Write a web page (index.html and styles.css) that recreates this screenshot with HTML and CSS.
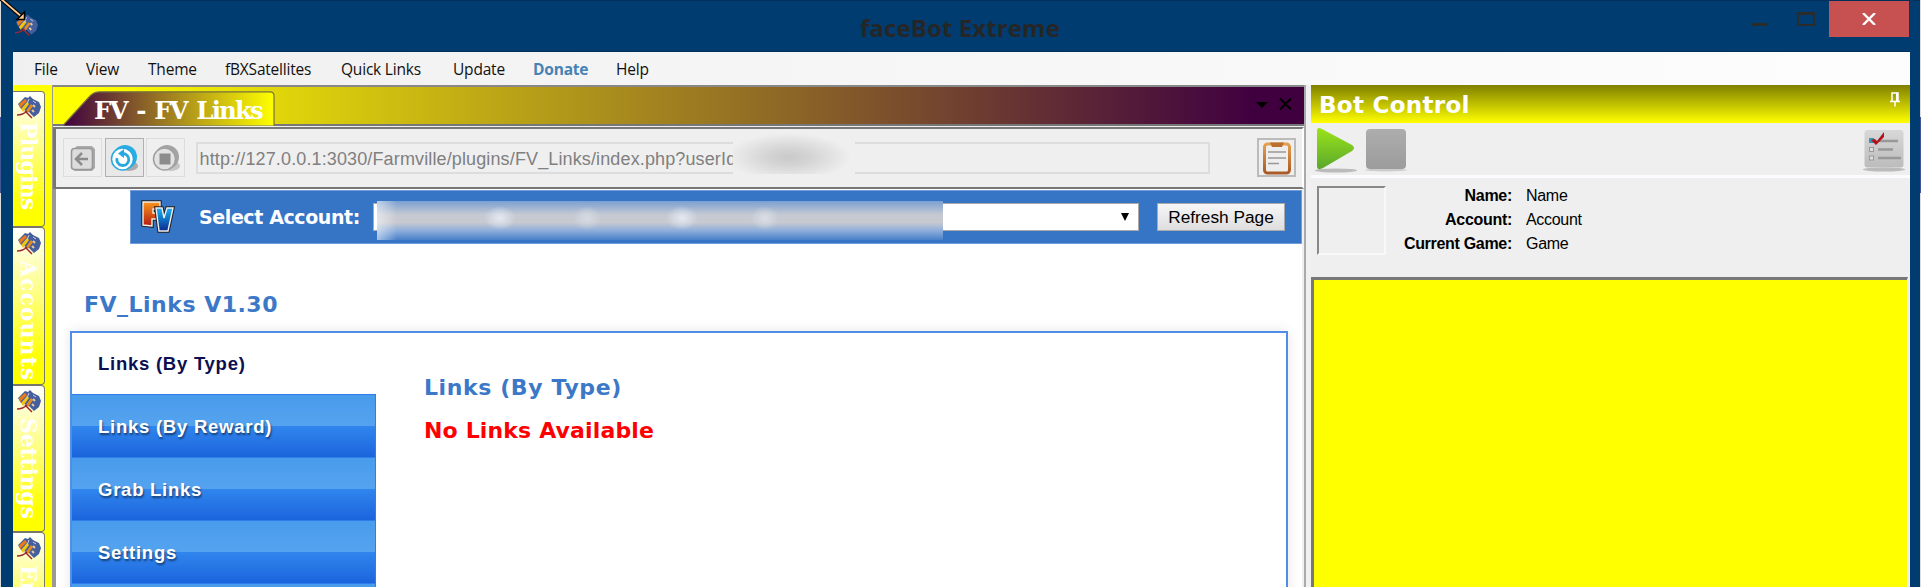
FILE: index.html
```
<!DOCTYPE html>
<html lang="en">
<head>
    <meta charset="UTF-8">
    <title>faceBot Extreme</title>
    <link rel="stylesheet" href="styles.css">
</head>
<body>
    <svg class="defs" width="0" height="0">
        <defs>
            <linearGradient id="green" x1="0" y1="0" x2="0" y2="1"><stop offset="0" stop-color="#9be31a"/><stop offset="1" stop-color="#5aa82c"/></linearGradient>
            <linearGradient id="grey" x1="0" y1="0" x2="0" y2="1"><stop offset="0" stop-color="#adadad"/><stop offset="1" stop-color="#9c9c9c"/></linearGradient>
            <linearGradient id="sheet" x1="0" y1="0" x2="0" y2="1"><stop offset="0" stop-color="#d8d8d8"/><stop offset="1" stop-color="#bcbcbc"/></linearGradient>
            <linearGradient id="wood" x1="0" y1="0" x2="0" y2="1"><stop offset="0" stop-color="#e5a04c"/><stop offset="1" stop-color="#a85a28"/></linearGradient>
            <linearGradient id="orange" x1="0" y1="0" x2="0" y2="1"><stop offset="0" stop-color="#f8961e"/><stop offset="1" stop-color="#b41a10"/></linearGradient>
            <linearGradient id="blue" x1="0" y1="0" x2="0" y2="1"><stop offset="0" stop-color="#18b4f4"/><stop offset="1" stop-color="#0a2a90"/></linearGradient>
            <linearGradient id="tab" x1="0" y1="0" x2="1" y2="0"><stop offset="0" stop-color="#400040"/><stop offset="1" stop-color="#ffff00"/></linearGradient>
        </defs>
        <symbol id="fb" viewBox="0 0 24 23">
            <path d="M1 8 8 1l3 1 2-2 3 3 6 3 2 5-2 6-5 4-5-5-8-3z" fill="#455f9e"/>
            <path d="M2 8 8 3l2 2-7 7z" fill="#e8791c"/>
            <path d="M4 13 10 6l2 2-6 8z" fill="#f5c411"/>
            <path d="M9 15l5-7 2 2-5 7z" fill="#e58b1e"/>
            <path d="M16 9l2 2M15 14l2 2" stroke="#e8c79a" stroke-width="2"/>
            <path d="M12 3l-2 5M16 5l3 2" stroke="#c9d0e4" stroke-width="1"/>
            <path d="M0 19q6 0 10-4M8 15l7 7" stroke="#9c2832" stroke-width="1.5" fill="none"/>
        </symbol>
    </svg>

    <div class="window">
        <header class="titlebar">
            <svg class="app-icon" viewBox="0 0 24 23"><use href="#fb"/></svg>
            <h1>faceBot Extreme</h1>
            <div class="window-buttons">
                <span class="minimize"></span>
                <span class="maximize"></span>
                <span class="close"><svg width="14" height="12" viewBox="0 0 14 12"><path d="M1 0l12 12M13 0L1 12" stroke="#fff" stroke-width="2.4"/></svg></span>
            </div>
        </header>

        <nav class="menu">
            <a>File</a><a>View</a><a>Theme</a><a>fBXSatellites</a><a>Quick Links</a><a>Update</a><a class="donate">Donate</a><a>Help</a>
        </nav>

        <main class="workspace">
            <aside class="side-tabs">
                <div class="side-tab plugins"><svg viewBox="0 0 24 23"><use href="#fb"/></svg><span>Plugins</span></div>
                <div class="side-tab accounts"><svg viewBox="0 0 24 23"><use href="#fb"/></svg><span>Accounts</span></div>
                <div class="side-tab settings"><svg viewBox="0 0 24 23"><use href="#fb"/></svg><span>Settings</span></div>
                <div class="side-tab extra"><svg viewBox="0 0 24 23"><use href="#fb"/></svg><span>Er</span></div>
            </aside>

            <section class="document">
                <div class="tab-strip">
                    <div class="doc-tab">
                        <svg class="tab-shape" width="212" height="35" viewBox="0 0 212 35"><path d="M0 34.5 27 5Q31 .8 37 .8H207q4 0 4 4V34.5" fill="url(#tab)" stroke="#77713c" stroke-width="1.2"/></svg>
                        <span>FV - FV Links</span>
                    </div>
                    <svg class="strip-icons" width="38" height="14" viewBox="0 0 38 14"><path d="M0 5h12L6 11z"/><path d="M24 1.500l11 11M35 1.500l-11 11" stroke="#000" stroke-width="2"/></svg>
                </div>

                <div class="toolbar">
                    <span class="tool"><svg width="28" height="28" viewBox="0 0 28 28"><path d="M5 5 8 2H23l3 3V24l-3 3H5z" fill="#aaa"/><rect x="2.500" y="4.500" width="21" height="21" rx="3" fill="#dcdcdc" stroke="#999" stroke-width="1.600"/><path d="M19 15H8M13 9l-6 6 6 6" fill="none" stroke="#8c8c8c" stroke-width="2.500"/></svg></span>
                    <span class="tool active"><svg width="28" height="28" viewBox="0 0 28 28"><ellipse cx="19" cy="22" rx="9" ry="5" fill="#aaa"/><circle cx="15" cy="13" r="12" fill="#29aee4"/><circle cx="12.500" cy="15" r="11" fill="#fff" stroke="#29a8de" stroke-width="1.500"/><path d="M7 14a6 6 0 1 0 6-4.500" fill="none" stroke="#29a8de" stroke-width="2.800"/><path d="M14 5v9L8 9.500z" fill="#29a8de"/></svg></span>
                    <span class="tool"><svg width="28" height="28" viewBox="0 0 28 28"><ellipse cx="19" cy="22" rx="9" ry="5" fill="#c4c4c4"/><circle cx="15" cy="13" r="12" fill="#a4a4a4"/><circle cx="12.500" cy="15" r="11" fill="#e2e2e2" stroke="#a0a0a0" stroke-width="1.500"/><rect x="7.500" y="9.500" width="11" height="11" fill="#8c8c8c"/></svg></span>
                    <div class="address"><span class="url">http://127.0.0.1:3030/Farmville/plugins/FV_Links/index.php?userId</span><span class="address-mask"></span></div>
                    <span class="tool clipboard"><svg width="30" height="34" viewBox="0 0 30 34"><rect x="2.500" y="3" width="25" height="29" rx="3" fill="#eee" stroke="url(#wood)" stroke-width="3"/><path d="M8 1.500H22L20 6H10z" fill="#b96f30"/><path d="M6 11H24M6 17H24M6 22.500H17" stroke="#999" stroke-width="1.500"/></svg></span>
                </div>

                <div class="page">
                    <div class="account-bar">
                        <svg class="fv-logo" width="34" height="34" viewBox="0 0 34 34">
                            <path d="M2 2H19V9H12V13H18V19H11V26L2 25z" fill="url(#orange)" stroke="#222" stroke-width="3.500"/>
                            <path d="M2 2H19V9H12V13H18V19H11V26L2 25z" fill="url(#orange)" stroke="#eee" stroke-width="1.400"/>
                            <path d="M15 8H21L23 18 26 8H32L27 31H18z" fill="url(#blue)" stroke="#222" stroke-width="3.500"/>
                            <path d="M15 8H21L23 18 26 8H32L27 31H18z" fill="url(#blue)" stroke="#eee" stroke-width="1.400"/>
                        </svg>
                        <label>Select Account:</label>
                        <div class="account-select"><span class="account-mask"></span><svg width="8" height="8" viewBox="0 0 8 8"><path d="M0 0H8L4 8z"/></svg></div>
                        <button>Refresh Page</button>
                    </div>
                    <h2>FV_Links V1.30</h2>
                    <div class="panel">
                        <ul class="links-menu">
                            <li class="current">Links (By Type)</li>
                            <li>Links (By Reward)</li>
                            <li>Grab Links</li>
                            <li>Settings</li>
                            <li></li>
                        </ul>
                        <div class="content">
                            <h3>Links (By Type)</h3>
                            <p>No Links Available</p>
                        </div>
                    </div>
                </div>
            </section>

            <aside class="bot-control">
                <div class="bot-header">
                    <h2>Bot Control</h2>
                    <svg width="10" height="15" viewBox="0 0 10 15"><path d="M2 9V1H8V9M0 9.500H10M5 9v5.500" fill="none" stroke="#fff" stroke-width="1.500"/><path d="M6 1h2v8H6z" fill="#fff"/></svg>
                </div>
                <div class="bot-tools">
                    <svg width="42" height="46" viewBox="0 0 42 46"><ellipse cx="21" cy="43.500" rx="21" ry="2" fill="#bbb"/><path d="M2 4q0-5 5-2L37 18q4 3 0 6L8 41q-6 3-6-2z" fill="url(#green)"/></svg>
                    <svg width="42" height="46" viewBox="0 0 42 46"><ellipse cx="21" cy="43" rx="21" ry="1.500" fill="#ccc"/><rect x="1" y="2" width="40" height="40" rx="4" fill="url(#grey)"/></svg>
                    <svg class="checklist" width="42" height="42" viewBox="0 0 42 42"><ellipse cx="21" cy="39.500" rx="21" ry="2" fill="#bbb"/><rect x="1.500" y="0" width="39" height="37.500" rx="3" fill="url(#sheet)"/><path d="M15 11H35M15 19.500H30M15 28H38" stroke="#989898" stroke-width="2.500"/><rect x="6" y="8" width="5" height="5" fill="#3d92b8"/><rect x="6.500" y="17.500" width="4" height="4" fill="#ddd" stroke="#999"/><rect x="6.500" y="26" width="4" height="4" fill="#ddd" stroke="#999"/><path d="M8 10l4-1 2 2 7-9v5L13 15z" fill="#b0141a"/></svg>
                </div>
                <div class="bot-info">
                    <div class="avatar"></div>
                    <dl>
                        <dt>Name:</dt><dd>Name</dd>
                        <dt>Account:</dt><dd>Account</dd>
                        <dt>Current Game:</dt><dd>Game</dd>
                    </dl>
                </div>
                <div class="bot-log"></div>
            </aside>
        </main>
    </div>

    <!-- resize cursor -->
    <svg class="cursor" width="28" height="24" viewBox="0 0 28 24"><path d="M0-2 22 17" stroke="#000" stroke-width="4"/><path d="M0-2 22 17" stroke="#ffc890" stroke-width="1.800"/><path d="M24.500 12V19.500H17z" fill="#ffc890" stroke="#000" stroke-width="1.500"/></svg>
</body>
</html>
```

FILE: styles.css
```
* {
    box-sizing: border-box;
}
body {
    margin: 0;
    height: 587px;
    overflow: hidden;
    background: linear-gradient(#dcdcdc 117px, #3f5794 117px, #3f5794 193px, #dcdcdc 193px);
    font-family: "Liberation Sans", Arial, sans-serif;
}
h1, h2, h3, p, ul, dl, dd {
    margin: 0;
    padding: 0;
}
.defs {
    position: absolute;
}
.window {
    display: flex;
    flex-direction: column;
    width: 1919px;
    height: 587px;
    margin-left: 1px;
    padding: 0 10px 0 12px;
    background: #003c70;
    border-top: 1px solid #00305a;
}
.titlebar {
    display: flex;
    justify-content: space-between;
    height: 51px;
    flex: none;
    border-bottom: 1px solid #00305a;
}
.app-icon {
    width: 23px;
    height: 23px;
    margin: 13px 0 0 2px;
}
.titlebar h1 {
    width: 200px;
    margin-left: 131px;
    font: bold 24px/54px "Open Sans", sans-serif;
    letter-spacing: 0.1px;
    color: #262626;
    white-space: nowrap;
}
.window-buttons {
    display: flex;
    align-items: flex-start;
    margin-right: 1px;
}
.minimize {
    width: 16px;
    height: 3px;
    margin: 22px 30px 0 0;
    background: #2b2b2b;
}
.maximize {
    width: 18px;
    height: 14px;
    margin: 11px 14px 0 0;
    border: 2px solid #2b2b2b;
    border-top-width: 3px;
}
.close {
    display: flex;
    align-items: center;
    justify-content: center;
    width: 80px;
    height: 36px;
    background: #c75050;
}
.menu {
    display: grid;
    grid-template-columns: 52px 62px 77px 116px 112px 80px 83px 60px;
    flex: none;
    height: 33px;
    padding-left: 21px;
    background: linear-gradient(90deg, #f0f0f0, #fdfdfd);
    font: 15.5px/34px "Open Sans", sans-serif;
    letter-spacing: -0.2px;
    color: #111;
    white-space: nowrap;
}
.menu .donate {
    font-weight: bold;
    color: #4682b4;
}
.workspace {
    display: flex;
    flex: 1;
    min-height: 0;
    background: #f0f0f0;
}

/* vertical tabs */
.side-tabs {
    width: 39px;
    padding-top: 6px;
    background: #ffff00;
    overflow: hidden;
}
.side-tab {
    display: flex;
    flex-direction: column;
    align-items: center;
    width: 32px;
    padding-top: 4px;
    border: 1px solid #77776a;
    border-left: 0;
    border-radius: 0 4px 4px 0;
    background: linear-gradient(#fff, #ffff00 85%);
}
.side-tab svg {
    flex: none;
    width: 24px;
    height: 23px;
}
.side-tab span {
    margin-top: 5px;
    writing-mode: vertical-rl;
    font: bold 22px/26px "DejaVu Serif", serif;
    color: #fff;
    white-space: nowrap;
}
.plugins {
    height: 136px;
}
.plugins span {
    margin-top: 3px;
    letter-spacing: -0.8px;
}
.accounts {
    height: 158px;
}
.accounts span {
    letter-spacing: 1px;
}
.settings {
    height: 147px;
}
.settings span {
    letter-spacing: -0.2px;
}
.extra {
    height: 120px;
}

/* document */
.document {
    display: flex;
    flex-direction: column;
    width: 1254px;
    border-left: 1px solid #999;
    border-right: 2px solid #aaa;
}
.tab-strip {
    display: flex;
    flex: none;
    justify-content: space-between;
    height: 41px;
    padding: 4px 10px 0 10px;
    border: solid #888;
    border-width: 2px 0;
    border-bottom-color: #777;
    background: linear-gradient(90deg, #ffff00 3%, #400040 96%);
}
.doc-tab {
    display: grid;
    height: 35px;
}
.doc-tab > * {
    grid-area: 1 / 1;
}
.doc-tab span {
    padding-left: 31px;
    font: bold 24.5px/40px "DejaVu Serif", serif;
    letter-spacing: -1.9px;
    word-spacing: 3px;
    color: #fff;
    white-space: nowrap;
}
.strip-icons {
    margin-top: 6px;
}
.toolbar {
    display: flex;
    flex: none;
    height: 62px;
    margin-top: 1px;
    padding: 9px 5px 0 7px;
    border: solid #777;
    border-width: 2px 2px 2px 3px;
    border-right-color: #fff;
    background: #efefef;
}
.tool {
    display: flex;
    align-items: center;
    justify-content: center;
    width: 39px;
    height: 39px;
    margin-right: 2.5px;
    border: 1px solid #ddd;
}
.tool.active {
    border: 1px solid #b0b0b0;
    background: #e8e8e8;
}
.clipboard {
    margin: 0 1px 0 auto;
    border: 2px solid #bbb;
}
.address {
    display: flex;
    width: 1014px;
    height: 32px;
    margin: 4px 0 0 8px;
    padding-left: 2px;
    border: 2px solid #ddd;
    font-size: 18px;
    line-height: 30px;
    letter-spacing: 0.13px;
    color: #808080;
    white-space: nowrap;
}
.url {
    width: 533px;
    overflow: hidden;
}
/* masked user id */
.address-mask {
    width: 122px;
    height: 41px;
    margin-top: -11px;
    background: radial-gradient(ellipse 62px 24px at 56px 24px, #cacaca, #d4d4d4 35%, #efefef) #efefef;
}
.page {
    flex: 1;
    min-height: 0;
    overflow: hidden;
    margin-right: 2px;
    border-left: 3px solid #999;
    background: #fff;
}
.account-bar {
    display: flex;
    align-items: center;
    height: 54px;
    margin: 1px 0 0 74px;
    padding-left: 10px;
    border: 1px solid #6f9ddb;
    background: #3674c6;
    color: #fff;
}
.account-bar label {
    width: 174px;
    margin-left: 24px;
    font: bold 19px "DejaVu Sans", sans-serif;
    letter-spacing: -0.4px;
    white-space: nowrap;
}
.account-select {
    display: flex;
    align-items: center;
    justify-content: space-between;
    width: 766px;
    height: 28px;
    padding: 0 9px 0 3px;
    border: 1px solid #aaa;
    background: #fff;
}
.account-mask {
    width: 566px;
    height: 39px;
    margin-top: 7px;
    background:
        linear-gradient(90deg, rgba(255, 255, 255, 0.5), transparent 20px),
        radial-gradient(ellipse 16px 12px at 123px 17px, #e3e8f2, transparent),
        radial-gradient(ellipse 14px 12px at 210px 17px, #d6dbe2, transparent),
        radial-gradient(ellipse 16px 12px at 305px 17px, #e3e8f2, transparent),
        radial-gradient(ellipse 14px 12px at 388px 17px, #d9dee4, transparent),
        linear-gradient(#7ba0d2, #c5c9d2 35%, #c8cad0 55%, #8eaedb 76%, #4880ca);
}
.account-bar button {
    width: 128px;
    height: 28px;
    margin-left: 18px;
    padding: 0;
    border: 1px solid #a9a9a9;
    background: linear-gradient(#f6f6f6, #dedede);
    font: 17.3px/25px "Liberation Sans", Arial, sans-serif;
    color: #000;
    white-space: nowrap;
}
.page > h2 {
    margin: 45px 0 0 28px;
    font: bold 22px/32px "DejaVu Sans", sans-serif;
    letter-spacing: 0.5px;
    color: #3c78c8;
    white-space: nowrap;
}
.panel {
    display: flex;
    width: 1218px;
    height: 300px;
    margin: 10px 0 0 14px;
    border: 2px solid #4f8de6;
    box-shadow: 0 0 12px rgba(0, 0, 0, 0.1);
}
.links-menu {
    width: 304px;
    list-style: none;
}
.links-menu li {
    height: 63px;
    padding-left: 26px;
    border-top: 1px solid #2f7de8;
    border-right: 1px solid #2f7de8;
    background: linear-gradient(#489cec, #55a3ef 50%, #3186ee 50%, #1b64dc);
    font-weight: bold;
    font-size: 18.5px;
    line-height: 63px;
    letter-spacing: 0.75px;
    color: #fff;
    text-shadow: 1px 2px 2px rgba(0, 0, 0, 0.5);
    white-space: nowrap;
}
.links-menu .current {
    height: 61px;
    border: 0;
    background: #fff;
    line-height: 61px;
    color: #0c1052;
    text-shadow: none;
}
.content {
    padding: 38px 0 0 48px;
    font-family: "DejaVu Sans", sans-serif;
    font-weight: bold;
    font-size: 22px;
    line-height: 34px;
    white-space: nowrap;
}
.content h3 {
    font-size: inherit;
    letter-spacing: 0.6px;
    color: #3c78c8;
}
.content p {
    margin-top: 9px;
    letter-spacing: 0.15px;
    color: #ff0000;
}

/* bot control */
.bot-control {
    display: flex;
    flex-direction: column;
    width: 599px;
    margin-left: 5px;
    background: #efefef;
}
.bot-header {
    display: flex;
    flex: none;
    justify-content: space-between;
    height: 38px;
    padding: 0 10px 0 8px;
    background: linear-gradient(#808000, #ffff00);
}
.bot-header h2 {
    font: bold 23px/41px "DejaVu Sans", sans-serif;
    letter-spacing: 0.3px;
    color: #fff;
}
.bot-header svg {
    margin-top: 7px;
}
.bot-tools {
    display: flex;
    flex: none;
    gap: 8px;
    height: 55px;
    padding: 4px 5px 0 4px;
    border-bottom: 3px solid #fbfcff;
}
.checklist {
    margin: 3px 0 0 auto;
}
.bot-info {
    display: flex;
    flex: none;
    height: 99px;
    padding: 8px 0 0 6px;
}
.avatar {
    width: 69px;
    height: 69px;
    border: 2px solid #888;
    border-right-color: #f8f8f8;
    border-bottom-color: #f8f8f8;
}
dl {
    display: grid;
    grid-template-columns: 126px 120px;
    grid-auto-rows: 24px;
    column-gap: 14px;
    font-size: 16px;
    line-height: 20px;
    white-space: nowrap;
}
dt {
    font-weight: bold;
    text-align: right;
    letter-spacing: -0.3px;
}
dd {
    letter-spacing: -0.3px;
}
.bot-log {
    flex: 1;
    margin-right: 2px;
    border: solid #777;
    border-width: 3px 1px 0 3px;
    border-right-color: #fff;
    background: #ffff00;
}

.cursor {
    position: absolute;
    top: 0;
    left: 0;
}
```
